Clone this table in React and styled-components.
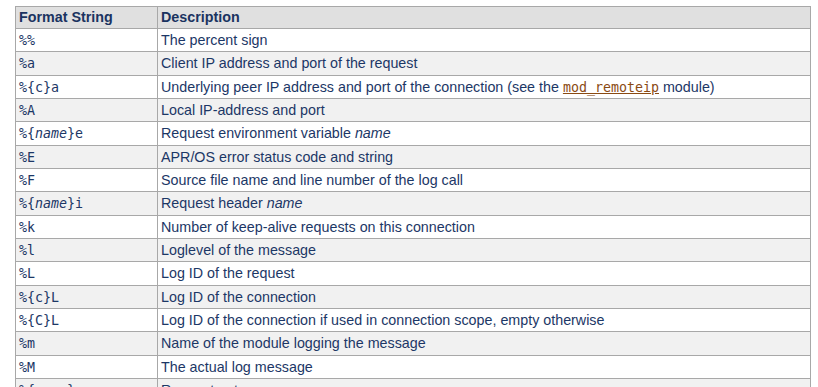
import styled, { createGlobalStyle } from "styled-components";

const GlobalStyle = createGlobalStyle`
  body {
    margin: 0;
    background: #fff;
    font-family: "Liberation Sans", Arial, sans-serif;
    font-size: 14.3px;
    color: #1c3766;
  }
`;

const Page = styled.div`
  padding: 6px 0 0 15px;
`;

const Table = styled.table`
  width: 796px;
  border-collapse: collapse;
  border: 1px solid #a8a8a8;
`;

const Th = styled.th`
  text-align: left;
  font-weight: bold;
  background: #e0e0e0;
  border: 1px solid #a8a8a8;
  padding: 2px 3px;
  line-height: 17px;
  color: #1a3360;

  &:first-child {
    width: 135px;
  }
`;

const Row = styled.tr`
  background: ${(p) => (p.$odd ? "#f1f1f1" : "#ffffff")};
`;

const Td = styled.td`
  border: 1px solid #a8a8a8;
  padding: 2px 3px;
  height: 18.33px;
  line-height: 18.33px;
  vertical-align: top;
`;

const Code = styled.code`
  font-family: "DejaVu Sans Mono", monospace;
  font-size: 13.3px;
  line-height: 1;
  color: #1c3766;
`;

const Link = styled.a`
  font-family: "DejaVu Sans Mono", monospace;
  font-size: 13.3px;
  line-height: 1;
  color: #8a4a12;
  text-decoration: underline;
`;

const named = (suffix) => (
  <>
    %{"{"}
    <em>name</em>
    {"}"}
    {suffix}
  </>
);

const rows = [
  ["%%", "The percent sign"],
  ["%a", "Client IP address and port of the request"],
  [
    "%{c}a",
    <>
      Underlying peer IP address and port of the connection (see the{" "}
      <Link href="#">mod_remoteip</Link> module)
    </>,
  ],
  ["%A", "Local IP-address and port"],
  [
    named("e"),
    <>
      Request environment variable <em>name</em>
    </>,
  ],
  ["%E", "APR/OS error status code and string"],
  ["%F", "Source file name and line number of the log call"],
  [
    named("i"),
    <>
      Request header <em>name</em>
    </>,
  ],
  ["%k", "Number of keep-alive requests on this connection"],
  ["%l", "Loglevel of the message"],
  ["%L", "Log ID of the request"],
  ["%{c}L", "Log ID of the connection"],
  ["%{C}L", "Log ID of the connection if used in connection scope, empty otherwise"],
  ["%m", "Name of the module logging the message"],
  ["%M", "The actual log message"],
  [
    named("n"),
    <>
      Request note <em>name</em>
    </>,
  ],
];

const App = () => (
  <Page>
    <GlobalStyle />
    <Table>
      <thead>
        <tr>
          <Th>Format String</Th>
          <Th>Description</Th>
        </tr>
      </thead>
      <tbody>
        {rows.map(([fmt, desc], i) => (
          <Row key={i} $odd={i % 2 === 1}>
            <Td>
              <Code>{fmt}</Code>
            </Td>
            <Td>{desc}</Td>
          </Row>
        ))}
      </tbody>
    </Table>
  </Page>
);

export default App;
